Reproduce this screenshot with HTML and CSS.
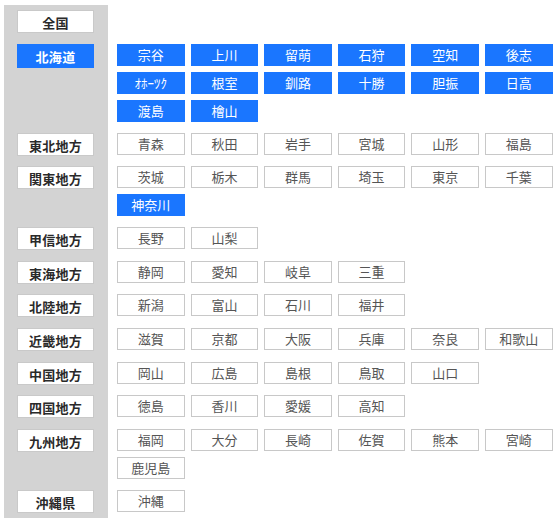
FILE: index.html
```html
<!DOCTYPE html>
<html lang="ja">
<head>
<meta charset="utf-8">
<link rel="stylesheet" href="styles.css">
</head>
<body>
<div class="page">
  <div class="row first">
    <div class="side"><div class="label">全国</div></div>
    <div class="btns"></div>
  </div>
  <div class="row">
    <div class="side"><div class="label on">北海道</div></div>
    <div class="btns">
      <div class="btn on">宗谷</div><div class="btn on">上川</div><div class="btn on">留萌</div><div class="btn on">石狩</div><div class="btn on">空知</div><div class="btn on">後志</div>
      <div class="btn on">ｵﾎｰﾂｸ</div><div class="btn on">根室</div><div class="btn on">釧路</div><div class="btn on">十勝</div><div class="btn on">胆振</div><div class="btn on">日高</div>
      <div class="btn on">渡島</div><div class="btn on">檜山</div>
    </div>
  </div>
  <div class="row">
    <div class="side"><div class="label">東北地方</div></div>
    <div class="btns">
      <div class="btn">青森</div><div class="btn">秋田</div><div class="btn">岩手</div><div class="btn">宮城</div><div class="btn">山形</div><div class="btn">福島</div>
    </div>
  </div>
  <div class="row">
    <div class="side"><div class="label">関東地方</div></div>
    <div class="btns">
      <div class="btn">茨城</div><div class="btn">栃木</div><div class="btn">群馬</div><div class="btn">埼玉</div><div class="btn">東京</div><div class="btn">千葉</div>
      <div class="btn on">神奈川</div>
    </div>
  </div>
  <div class="row">
    <div class="side"><div class="label">甲信地方</div></div>
    <div class="btns">
      <div class="btn">長野</div><div class="btn">山梨</div>
    </div>
  </div>
  <div class="row">
    <div class="side"><div class="label">東海地方</div></div>
    <div class="btns">
      <div class="btn">静岡</div><div class="btn">愛知</div><div class="btn">岐阜</div><div class="btn">三重</div>
    </div>
  </div>
  <div class="row">
    <div class="side"><div class="label">北陸地方</div></div>
    <div class="btns">
      <div class="btn">新潟</div><div class="btn">富山</div><div class="btn">石川</div><div class="btn">福井</div>
    </div>
  </div>
  <div class="row">
    <div class="side"><div class="label">近畿地方</div></div>
    <div class="btns">
      <div class="btn">滋賀</div><div class="btn">京都</div><div class="btn">大阪</div><div class="btn">兵庫</div><div class="btn">奈良</div><div class="btn">和歌山</div>
    </div>
  </div>
  <div class="row">
    <div class="side"><div class="label">中国地方</div></div>
    <div class="btns">
      <div class="btn">岡山</div><div class="btn">広島</div><div class="btn">島根</div><div class="btn">鳥取</div><div class="btn">山口</div>
    </div>
  </div>
  <div class="row">
    <div class="side"><div class="label">四国地方</div></div>
    <div class="btns">
      <div class="btn">徳島</div><div class="btn">香川</div><div class="btn">愛媛</div><div class="btn">高知</div>
    </div>
  </div>
  <div class="row">
    <div class="side"><div class="label">九州地方</div></div>
    <div class="btns">
      <div class="btn">福岡</div><div class="btn">大分</div><div class="btn">長崎</div><div class="btn">佐賀</div><div class="btn">熊本</div><div class="btn">宮崎</div>
      <div class="btn">鹿児島</div>
    </div>
  </div>
  <div class="row last">
    <div class="side"><div class="label">沖縄県</div></div>
    <div class="btns">
      <div class="btn">沖縄</div>
    </div>
  </div>
</div>
</body>
</html>
```
FILE: styles.css
```css
html, body {
  margin: 0;
  padding: 0;
  background: #ffffff;
}
body {
  padding: 5px 0 0 4px;
  font-family: "Noto Sans CJK JP", "Noto Sans", sans-serif;
  font-size: 13px;
}
.page {
  display: flex;
  flex-direction: column;
}
.row {
  display: flex;
  align-items: stretch;
}
.side {
  width: 104px;
  flex: none;
  box-sizing: border-box;
  background: #d3d3d3;
  padding: 0 13px 5px 13px;
}
.row.first .side {
  padding-top: 5px;
}
.row.last .side {
  padding-bottom: 0;
}
.label {
  box-sizing: border-box;
  width: 77px;
  height: 23px;
  margin-bottom: 5.6px;
  background: #ffffff;
  border: 1px solid #c9c9c9;
  color: #2a2a2a;
  font-weight: bold;
  font-size: 13px;
  line-height: 24px;
  text-align: center;
  letter-spacing: 0.3px;
}
.label.on {
  height: 24px;
  background: #1a76ff;
  border-color: #1a76ff;
  color: #ffffff;
  line-height: 23px;
}
.btns {
  padding: 0 0 11px 9px;
  display: grid;
  grid-template-columns: repeat(6, 67.6px);
  grid-auto-rows: 22px;
  column-gap: 6px;
  row-gap: 6px;
  align-content: start;
}
.row.first .btns {
  padding-top: 5px;
}
.row.last .btns {
  padding-bottom: 0;
}
.btn {
  box-sizing: border-box;
  height: 22px;
  border: 1px solid #c8c8c8;
  background: #ffffff;
  color: #555555;
  font-size: 13px;
  line-height: 20px;
  text-align: center;
}
.btn.on {
  background: #1a76ff;
  border-color: #1a76ff;
  color: #ffffff;
}
```
